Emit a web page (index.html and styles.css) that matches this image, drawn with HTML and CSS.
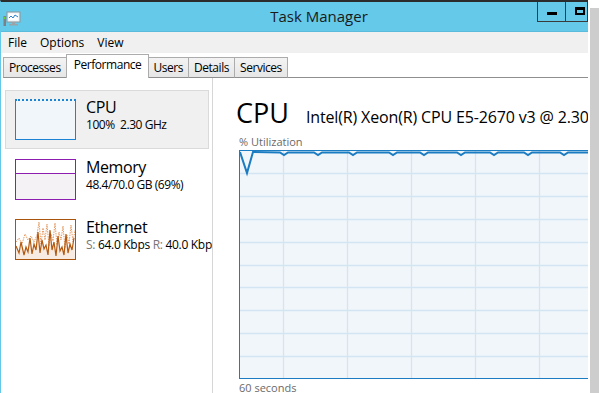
FILE: index.html
```html
<!DOCTYPE html>
<html lang="en">
<head>
    <meta charset="UTF-8">
    <title>Task Manager</title>
    <link rel="stylesheet" href="styles.css">
</head>
<body>
    <div class="window">
        <div class="titlebar">
            <svg class="app-icon" width="18" height="16" viewBox="0 0 18 16">
                <rect x="4" y="1" width="13" height="10" fill="#e8eef2" stroke="#8c969c"/>
                <rect x="5.5" y="2.5" width="10" height="7" fill="#ffffff"/>
                <polyline points="6,7 8,5 10,7 12,4 15,6" fill="none" stroke="#2a7fd0" stroke-width="1"/>
                <rect x="9" y="11" width="3" height="2" fill="#9aa3a8"/>
                <rect x="6" y="13" width="9" height="1.5" fill="#9aa3a8"/>
                <rect x="0.5" y="5" width="2.5" height="10" fill="#7a8288"/>
                <rect x="1" y="6" width="1.5" height="2" fill="#6fd23a"/>
            </svg>
            <div class="title">Task Manager</div>
            <div class="win-btn minimize"><span></span></div>
            <div class="win-btn maximize"><span></span></div>
        </div>
        <div class="menubar">
            <span>File</span>
            <span>Options</span>
            <span>View</span>
        </div>
        <div class="tabs">
            <div class="tab">Processes</div>
            <div class="tab active">Performance</div>
            <div class="tab">Users</div>
            <div class="tab">Details</div>
            <div class="tab">Services</div>
            <div class="tab-rest"></div>
        </div>
        <div class="content">
            <div class="sidebar">
                <div class="item selected">
                    <div class="thumb cpu-thumb"></div>
                    <div class="item-text">
                        <div class="item-name">CPU</div>
                        <div class="item-value">100%&nbsp; 2.30 GHz</div>
                    </div>
                </div>
                <div class="item">
                    <div class="thumb mem-thumb"><div class="mem-used"></div></div>
                    <div class="item-text">
                        <div class="item-name">Memory</div>
                        <div class="item-value">48.4/70.0 GB (69%)</div>
                    </div>
                </div>
                <div class="item">
                    <div class="thumb eth-thumb">
                        <svg width="59" height="39" viewBox="0 0 59 39">
                            <polygon points="0,39 0,26 3,33 5,22 8,35 10,27 12,32 14,18 16,34 18,24 20,30 22,12 24,33 26,20 28,29 30,25 32,35 34,10 36,30 38,22 40,36 42,16 44,31 46,27 48,35 50,14 52,33 54,24 56,30 58,18 59,39" fill="#f8ece2"/>
                            <polyline points="0,22 3,18 6,24 9,14 12,20 15,16 18,22 21,15 23,2 25,24 27,8 29,20 31,4 33,26 35,14 37,21 39,3 41,25 43,12 45,20 47,6 49,28 51,15 53,24 55,5 57,22 59,10" fill="none" stroke="#e59a62" stroke-width="1" stroke-dasharray="1.5 1"/>
                            <polyline points="0,26 3,33 5,22 8,35 10,27 12,32 14,18 16,34 18,24 20,30 22,12 24,33 26,20 28,29 30,25 32,35 34,10 36,30 38,22 40,36 42,16 44,31 46,27 48,35 50,14 52,33 54,24 56,30 58,18" fill="none" stroke="#b35a12" stroke-width="1.2"/>
                        </svg>
                    </div>
                    <div class="item-text">
                        <div class="item-name">Ethernet</div>
                        <div class="item-value eth-value"><span class="dim">S:</span> 64.0 Kbps <span class="dim">R:</span> 40.0 Kbps</div>
                    </div>
                </div>
            </div>
            <div class="detail">
                <div class="detail-head">
                    <div class="detail-title">CPU</div>
                    <div class="detail-model">Intel(R) Xeon(R) CPU E5-2670 v3 @ 2.30GHz</div>
                </div>
                <div class="graph-label">% Utilization</div>
                <div class="graph">
                    <svg id="cpuGraph" width="420" height="227"></svg>
                </div>
                <div class="graph-foot">60 seconds</div>
            </div>
        </div>
    </div>
    <div class="edge"><div class="edge-bar"></div></div>

    <script>
        const svg = document.getElementById("cpuGraph");
        const ns = "http://www.w3.org/2000/svg";
        const w = 420;
        const h = 227;

        function line(x1, y1, x2, y2) {
            const l = document.createElementNS(ns, "line");
            l.setAttribute("x1", x1);
            l.setAttribute("y1", y1);
            l.setAttribute("x2", x2);
            l.setAttribute("y2", y2);
            l.setAttribute("stroke", "#d3e5f3");
            l.setAttribute("stroke-width", "1.3");
            svg.appendChild(l);
        }

        for (let x = 43.5; x < w; x += 64) line(x, 0, x, h);
        for (let i = 1; i < 10; i++) {
            const y = Math.round(i * 22.9) - 0.5;
            line(0, y, w, y);
        }

        // utilisation sits near 100% with small dips
        const dips = [44, 78, 113, 153, 184, 221, 254, 288, 324, 360, 396];
        let pts = "0,1 7,22 13,1";
        for (const d of dips) {
            pts += ` ${d - 4},1.5 ${d},4 ${d + 4},1.5`;
        }
        pts += ` ${w},1.5`;
        const p = document.createElementNS(ns, "polyline");
        p.setAttribute("points", pts);
        p.setAttribute("fill", "none");
        p.setAttribute("stroke", "#1c7cc2");
        p.setAttribute("stroke-width", "2");
        svg.appendChild(p);
    </script>
</body>
</html>
```

FILE: styles.css
```css
* {
    margin: 0;
    padding: 0;
    box-sizing: border-box;
}

body {
    display: flex;
    width: 599px;
    height: 393px;
    overflow: hidden;
    background: #fff;
    font-family: "Open Sans", "Noto Sans", sans-serif;
    color: #000;
}

.window {
    width: 588px;
    flex-shrink: 0;
    display: flex;
    flex-direction: column;
    border-top: 2px solid #2c2c2c;
    border-left: 1px solid #64c9e9;
    overflow: hidden;
}

.edge {
    width: 11px;
    display: flex;
    flex-direction: column;
    padding: 8px 0 0 2px;
    background: #fff;
}

.edge-bar {
    flex: 1;
    background: #cdcdcd;
}

/* title bar */
.titlebar {
    height: 30px;
    flex-shrink: 0;
    display: flex;
    align-items: flex-start;
    background: #65c9e9;
    border-bottom: 1px solid #5bbbdc;
}

.app-icon {
    margin: 9px 0 0 2px;
}

.title {
    flex: 1;
    padding: 4px 0 0 80px;
    text-align: center;
    font-size: 15px;
    color: #1a1a1a;
}

.win-btn {
    height: 20px;
    border: 1px solid #3a3a3a;
    border-top: none;
    display: flex;
    justify-content: center;
    align-items: center;
}

.minimize {
    width: 29px;
}

.minimize span {
    width: 10px;
    height: 3px;
    margin-top: 4px;
    background: #000;
}

.maximize {
    width: 22px;
    border-left: none;
    justify-content: flex-start;
    padding-left: 9px;
}

.maximize span {
    width: 10px;
    height: 8px;
    margin-top: -2px;
    border: 2px solid #000;
    border-top-width: 3px;
}

/* menu */
.menubar {
    height: 21px;
    flex-shrink: 0;
    display: flex;
    align-items: center;
    gap: 13px;
    padding-left: 7px;
    background: #f0f0f0;
    font-size: 12px;
}

/* tabs */
.tabs {
    height: 25px;
    flex-shrink: 0;
    display: flex;
    align-items: flex-end;
    padding-left: 2px;
    background: #fff;
}

.tab {
    height: 21px;
    padding: 0 5px;
    border: 1px solid #acacac;
    border-left: none;
    border-bottom-color: #8f8f8f;
    background: linear-gradient(#f3f3f3, #e6e6e6);
    font-size: 12px;
    letter-spacing: -0.45px;
    line-height: 19px;
}

.tab:first-child {
    border-left: 1px solid #acacac;
}

.tab.active {
    height: 24px;
    padding: 0 7px;
    margin: 0 -1px 0 -1px;
    border-left: 1px solid #acacac;
    border-right: 1px solid #acacac;
    border-bottom: none;
    background: #fff;
    position: relative;
    line-height: 19px;
}

.tab-rest {
    flex: 1;
    border-bottom: 1px solid #8f8f8f;
}

/* content */
.content {
    flex: 1;
    min-height: 0;
    display: flex;
    background: #fff;
    overflow: hidden;
}

.sidebar {
    width: 212px;
    flex-shrink: 0;
    padding: 12px 0 0 4px;
    border-right: 1px solid #d6d6d6;
    overflow: hidden;
}

.item {
    width: 204px;
    height: 60px;
    display: flex;
    align-items: flex-start;
    padding: 8px 0 0 9px;
    border: 1px solid transparent;
    white-space: nowrap;
}

.item.selected {
    height: 59px;
    margin-bottom: 1px;
    background: #f0f0f0;
    border-color: #dadada;
}

.thumb {
    width: 61px;
    height: 41px;
    flex-shrink: 0;
    border: 1px solid;
}

.cpu-thumb {
    border-color: #1b83d4;
    border-top: 2px dotted #1b83d4;
    background: #f1f6fb;
}

.mem-thumb {
    display: flex;
    flex-direction: column;
    justify-content: flex-end;
    border-color: #8c1db0;
    background: #fff;
}

.mem-used {
    height: 26px;
    border-top: 1px solid #8c1db0;
    background: #f4f2f5;
}

.eth-thumb {
    border-color: #a9540c;
    background: #fff;
    overflow: hidden;
}

.eth-thumb svg {
    display: block;
}

.item-text {
    margin-left: 10px;
}

.item-name {
    font-size: 16px;
    line-height: 20px;
    letter-spacing: -0.4px;
    margin-top: -2px;
}

.item-value {
    font-size: 12px;
    line-height: 16px;
    letter-spacing: -0.45px;
}

.eth-value {
    letter-spacing: -0.3px;
}

.dim {
    color: #777;
}

/* detail */
.detail {
    flex: 1;
    padding: 18px 0 0 26px;
    min-width: 0;
}

.detail-head {
    display: flex;
    align-items: baseline;
    white-space: nowrap;
}

.detail-title {
    margin-left: -3px;
    font-size: 27px;
    line-height: 34px;
}

.detail-model {
    margin-left: 17px;
    font-size: 16px;
    letter-spacing: -0.15px;
}

.graph-label {
    margin-top: 5px;
    font-size: 11px;
    line-height: 14px;
    color: #6a6a6a;
}

.graph {
    width: 420px;
    height: 229px;
    margin-top: 1px;
    border: 1px solid #1c7cc2;
    background: #f1f6fa;
}

.graph svg {
    display: block;
}

.graph-foot {
    margin-top: 1px;
    font-size: 11px;
    color: #6a6a6a;
}
```
